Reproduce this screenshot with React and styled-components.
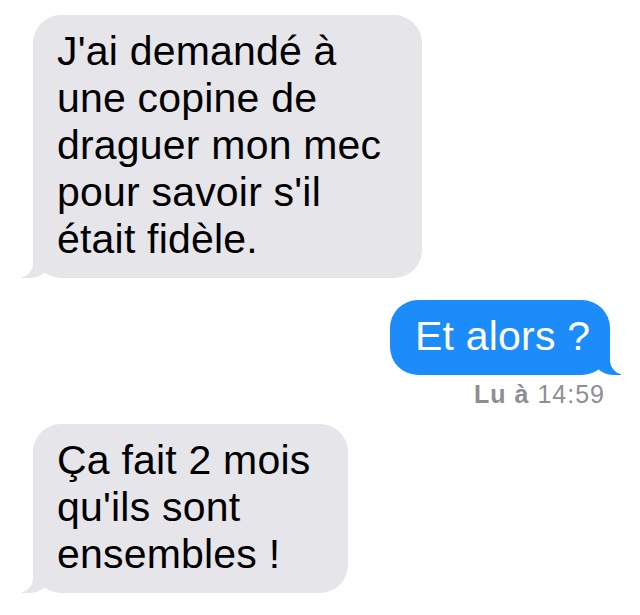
import styled, { createGlobalStyle } from 'styled-components';

const GlobalStyle = createGlobalStyle`
  body {
    margin: 0;
    background: #ffffff;
    font-family: "Liberation Sans", Arial, sans-serif;
  }
`;

const Thread = styled.div`
  display: flex;
  flex-direction: column;
  padding: 15px 30px 0 33px;
`;

const Bubble = styled.div`
  position: relative;
  box-sizing: border-box;
  width: ${(p) => p.$width}px;
  padding: 13px 0 15px ${(p) => (p.$mine ? 25 : 24)}px;
  border-radius: 28px;
  font-size: 41px;
  line-height: 47px;
  letter-spacing: 0.2px;
  color: ${(p) => (p.$mine ? '#ffffff' : '#000000')};
  background: ${(p) => (p.$mine ? '#1b8cfa' : '#e5e5ea')};
  align-self: ${(p) => (p.$mine ? 'flex-end' : 'flex-start')};
  margin-top: ${(p) => p.$gap || 0}px;

  &::before {
    content: '';
    position: absolute;
    bottom: 0;
    ${(p) => (p.$mine ? 'right: -11px;' : 'left: -11px;')}
    width: 30px;
    height: 30px;
    background: inherit;
    ${(p) =>
      p.$mine
        ? 'border-bottom-left-radius: 22px;'
        : 'border-bottom-right-radius: 22px;'}
  }

  &::after {
    content: '';
    position: absolute;
    bottom: 0;
    ${(p) => (p.$mine ? 'right: -15px;' : 'left: -15px;')}
    width: 15px;
    height: 30px;
    background: #ffffff;
    ${(p) =>
      p.$mine
        ? 'border-bottom-left-radius: 15px;'
        : 'border-bottom-right-radius: 15px;'}
  }
`;

const Line = styled.span`
  display: block;
  white-space: nowrap;
`;

const Receipt = styled.div`
  align-self: flex-end;
  margin: 5px 5px 0 0;
  font-size: 25px;
  line-height: 29px;
  color: #8e8e93;
  letter-spacing: 1px;

  b {
    font-weight: 700;
  }
`;

const messages = [
  {
    mine: false,
    width: 389,
    lines: ["J'ai demandé à", 'une copine de', 'draguer mon mec', "pour savoir s'il", 'était fidèle.'],
  },
  { mine: true, width: 220, gap: 22, lines: ['Et alors ?'] },
];

export default function App() {
  return (
    <>
      <GlobalStyle />
      <Thread>
        {messages.map((m, i) => (
          <Bubble key={i} $mine={m.mine} $width={m.width} $gap={m.gap}>
            {m.lines.map((l) => (
              <Line key={l}>{l}</Line>
            ))}
          </Bubble>
        ))}
        <Receipt>
          <b>Lu à</b> 14:59
        </Receipt>
        <Bubble $width={315} $gap={15}>
          <Line>Ça fait 2 mois</Line>
          <Line>qu'ils sont</Line>
          <Line>ensembles !</Line>
        </Bubble>
      </Thread>
    </>
  );
}
